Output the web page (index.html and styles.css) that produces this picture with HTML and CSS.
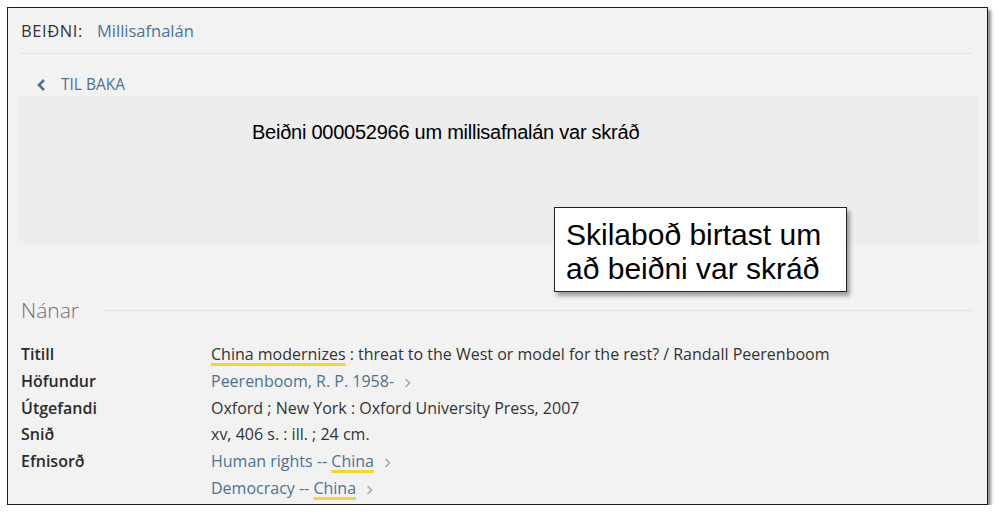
FILE: index.html
```html
<!DOCTYPE html>
<html lang="is">
<head>
<meta charset="utf-8">
<title>Beiðni</title>
<link rel="stylesheet" href="styles.css">
</head>
<body>
<div class="frame">
  <div class="header">
    <span class="header-label">BEIÐNI:</span>
    <a class="link header-link">Millisafnalán</a>
  </div>
  <a class="back">
    <svg class="back-icon" width="9" height="12" viewBox="0 0 9 12"><path d="M7 1 L2 6 L7 11" fill="none" stroke="#4d7394" stroke-width="2.6"/></svg>
    <span>TIL BAKA</span>
  </a>
  <div class="message">Beiðni 000052966 um millisafnalán var skráð</div>
  <div class="callout">Skilaboð birtast um<br>að beiðni var skráð</div>
  <div class="section-title">
    <span class="section-name">Nánar</span>
    <span class="section-rule"></span>
  </div>
  <div class="details">
    <div class="label">Titill</div>
    <div class="value"><span class="mark">China modernizes</span> : threat to the West or model for the rest? / Randall Peerenboom</div>
    <div class="label">Höfundur</div>
    <div class="value"><a class="link">Peerenboom, R. P. 1958-</a><svg class="chev" width="7" height="10" viewBox="0 0 7 10"><path d="M1.5 1 L5.5 5 L1.5 9" fill="none" stroke="#a9a9a9" stroke-width="1.6"/></svg></div>
    <div class="label">Útgefandi</div>
    <div class="value">Oxford ; New York : Oxford University Press, 2007</div>
    <div class="label">Snið</div>
    <div class="value">xv, 406 s. : ill. ; 24 cm.</div>
    <div class="label">Efnisorð</div>
    <div class="value"><a class="link">Human rights -- <span class="mark">China</span></a><svg class="chev" width="7" height="10" viewBox="0 0 7 10"><path d="M1.5 1 L5.5 5 L1.5 9" fill="none" stroke="#a9a9a9" stroke-width="1.6"/></svg></div>
    <div class="label"></div>
    <div class="value"><a class="link">Democracy -- <span class="mark">China</span></a><svg class="chev" width="7" height="10" viewBox="0 0 7 10"><path d="M1.5 1 L5.5 5 L1.5 9" fill="none" stroke="#a9a9a9" stroke-width="1.6"/></svg></div>
  </div>
</div>
</body>
</html>
```

FILE: styles.css
```css
html, body {
  margin: 0;
  padding: 0;
  background: #ffffff;
}

body {
  font-family: "Open Sans", Lato, sans-serif;
  color: #333333;
}

.frame {
  position: relative;
  margin: 7px 0 0 7px;
  width: 981px;
  height: 498px;
  box-sizing: border-box;
  border: 1px solid #1e1e1e;
  background: #f2f2f2;
  box-shadow: 3px 3px 3px rgba(0, 0, 0, 0.45);
  overflow: hidden;
}

.link {
  color: #4d7394;
  text-decoration: none;
}

.header {
  margin: 0 16px 0 13px;
  padding: 10px 0 9px;
  line-height: 26px;
  font-size: 16.5px;
  border-bottom: 1px solid #e2e2e2;
  display: flex;
  gap: 14px;
}

.header-label {
  color: #333;
  letter-spacing: 0.6px;
}

.back {
  display: flex;
  align-items: center;
  padding: 19px 0 0 29px;
  line-height: 23px;
  font-size: 15.5px;
  color: #4d7394;
  gap: 15px;
}

.back-icon {
  display: block;
}

.message {
  margin: 0 8px 0 9px;
  height: 148px;
  box-sizing: border-box;
  padding: 25px 0 0 235px;
  background: #ededed;
  font-family: "Liberation Sans", Arial, sans-serif;
  font-size: 20px;
  line-height: 23px;
  letter-spacing: -0.25px;
  color: #000;
}

.callout {
  position: absolute;
  left: 546px;
  top: 199px;
  width: 293px;
  height: 85px;
  box-sizing: border-box;
  padding: 10px 0 0 11px;
  background: #fff;
  border: 1px solid #222;
  box-shadow: 3px 4px 4px rgba(0, 0, 0, 0.35);
  font-family: "Liberation Sans", Arial, sans-serif;
  font-size: 30px;
  line-height: 34px;
  color: #000;
}

.callout::before {
  content: "";
  position: absolute;
  left: 100%;
  top: 20px;
  width: 42px;
  height: 74px;
  margin-left: 1px;
  background: #ededed;
  z-index: -1;
}

.section-title {
  display: flex;
  align-items: center;
  gap: 24px;
  margin: 52px 16px 0 13px;
  line-height: 28px;
}

.section-name {
  font-size: 21px;
  font-weight: 300;
  color: #707070;
}

.section-rule {
  flex: 1;
  height: 1px;
  background: #e2e2e2;
}

.details {
  display: grid;
  grid-template-columns: 190px 1fr;
  margin: 17px 16px 0 13px;
  font-size: 16px;
  line-height: 26.8px;
}

.label {
  font-weight: 600;
  color: #2b2b2b;
}

.value {
  color: #333;
}

.mark {
  text-decoration: underline;
  text-decoration-color: #f3d43a;
  text-decoration-thickness: 3px;
  text-underline-offset: 3px;
}

.chev {
  margin-left: 10px;
  vertical-align: -1px;
}
```
